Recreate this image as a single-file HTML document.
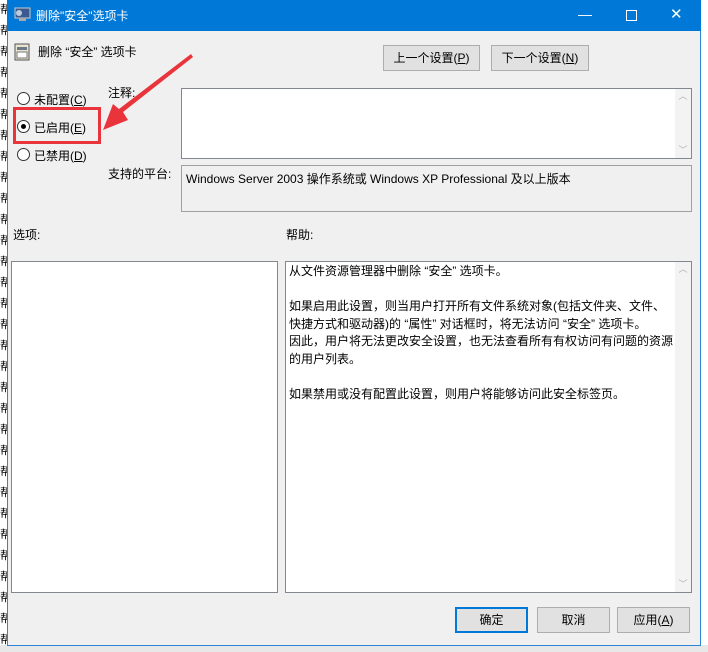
<!DOCTYPE html>
<html><head><meta charset="utf-8"><style>
*{margin:0;padding:0;box-sizing:border-box}
body{width:708px;height:652px;background:#fff;position:relative;overflow:hidden;font-family:"Liberation Sans","Noto Sans CJK SC","Microsoft YaHei",sans-serif;font-size:12px;color:#000}
.a{position:absolute}
.win{left:7px;top:0;width:694px;height:646px;background:#f0f0f0;border:1px solid #2b86d8;border-top:none}
.tb{left:7px;top:0;width:694px;height:31px;background:#0078d7}
.btn{position:absolute;background:#e1e1e1;border:1px solid #adadad;text-align:center;font-size:12px;line-height:24px}
.box{position:absolute;background:#fff;border:1px solid #828790}
.sb{position:absolute;right:0;top:0;bottom:0;width:16px;background:#f3f3f3;color:#b0b0b0;font-size:9px;text-align:center}
.rad{position:absolute;width:13px;height:13px;border:1px solid #333;border-radius:50%;background:#fff}
.lb{position:absolute;white-space:nowrap}
.help{position:absolute;left:289px;top:263px;line-height:17.5px;white-space:nowrap}
</style></head><body>
<div class="a" style="left:0;top:0;width:7px;height:652px;overflow:hidden;font-size:11px;line-height:21px;color:#000">
帮<br>帮<br>帮<br>帮<br>帮<br>帮<br>帮<br>帮<br>帮<br>帮<br>帮<br>帮<br>帮<br>帮<br>帮<br>帮<br>帮<br>帮<br>帮<br>帮<br>帮<br>帮<br>帮<br>帮<br>帮<br>帮<br>帮<br>帮<br>帮<br>帮<br>帮</div>
<div class="a" style="left:0;top:645px;width:708px;height:7px;background:#e8e8e8"></div>
<div class="a win"></div>
<div class="a tb"></div>
<svg class="a" style="left:14px;top:7px" width="18" height="16"><rect x="1" y="1" width="15" height="10" fill="#3a5a90" stroke="#ccc"/><rect x="5" y="11" width="7" height="3" fill="#aaa"/><circle cx="5" cy="6" r="3" fill="#bcd"/></svg>
<div class="lb" style="left:36px;top:7px;color:#fff;font-size:12px">删除"安全"选项卡</div>
<div class="lb" style="left:578px;top:6px;color:#fff;font-size:14px">—</div>
<div class="a" style="left:626px;top:10px;width:11px;height:11px;border:1px solid #fff"></div>
<div class="lb" style="left:670px;top:5px;color:#fff;font-size:15px">✕</div>
<svg class="a" style="left:14px;top:43px" width="16" height="18"><rect x="1" y="1" width="14" height="16" fill="#e8e4d0" stroke="#555"/><rect x="3" y="4" width="10" height="3" fill="#6a7a8a"/><rect x="3" y="9" width="10" height="6" fill="#fff" stroke="#777"/></svg>
<div class="lb" style="left:38px;top:43px">删除 “安全” 选项卡</div>
<div class="btn" style="left:383px;top:45px;width:97px;height:26px">上一个设置(<u>P</u>)</div>
<div class="btn" style="left:491px;top:45px;width:98px;height:26px">下一个设置(<u>N</u>)</div>
<div class="rad" style="left:17px;top:92px"></div><div class="lb" style="left:34px;top:91px">未配置(<u>C</u>)</div>
<div class="rad" style="left:17px;top:120px"></div><div class="a" style="left:21px;top:124px;width:5px;height:5px;border-radius:50%;background:#000"></div><div class="lb" style="left:34px;top:119px">已启用(<u>E</u>)</div>
<div class="rad" style="left:17px;top:148px"></div><div class="lb" style="left:34px;top:147px">已禁用(<u>D</u>)</div>
<div class="a" style="left:13px;top:107px;width:88px;height:37px;border:3px solid #e8343a"></div>
<div class="lb" style="left:108px;top:84px">注释:</div>
<div class="box" style="left:181px;top:88px;width:511px;height:71px"><div class="sb">︿<div style="position:absolute;bottom:2px;width:16px">﹀</div></div></div>
<div class="lb" style="left:108px;top:165px">支持的平台:</div>
<div class="a" style="left:181px;top:165px;width:511px;height:47px;border:1px solid #a0a0a0;background:#f0f0f0"></div>
<div class="lb" style="left:186px;top:170px">Windows Server 2003 操作系统或 Windows XP Professional 及以上版本</div>
<svg class="a" style="left:95px;top:50px" width="100" height="85"><polygon points="96,4 98,7 28,62 33,70 8,80 18,54 24,59" fill="#e8343a"/></svg>
<div class="lb" style="left:13px;top:226px">选项:</div>
<div class="lb" style="left:286px;top:226px">帮助:</div>
<div class="box" style="left:11px;top:261px;width:267px;height:332px"></div>
<div class="box" style="left:285px;top:261px;width:407px;height:332px"><div class="sb">︿<div style="position:absolute;bottom:2px;width:16px">﹀</div></div></div>
<div class="help">从文件资源管理器中删除 “安全” 选项卡。<br><br>如果启用此设置，则当用户打开所有文件系统对象(包括文件夹、文件、<br>快捷方式和驱动器)的 “属性” 对话框时，将无法访问 “安全” 选项卡。<br>因此，用户将无法更改安全设置，也无法查看所有有权访问有问题的资源<br>的用户列表。<br><br>如果禁用或没有配置此设置，则用户将能够访问此安全标签页。</div>
<div class="btn" style="left:455px;top:607px;width:73px;height:26px;border:2px solid #0078d7;line-height:22px">确定</div>
<div class="btn" style="left:537px;top:607px;width:73px;height:26px">取消</div>
<div class="btn" style="left:617px;top:607px;width:73px;height:26px">应用(<u>A</u>)</div>
</body></html>
